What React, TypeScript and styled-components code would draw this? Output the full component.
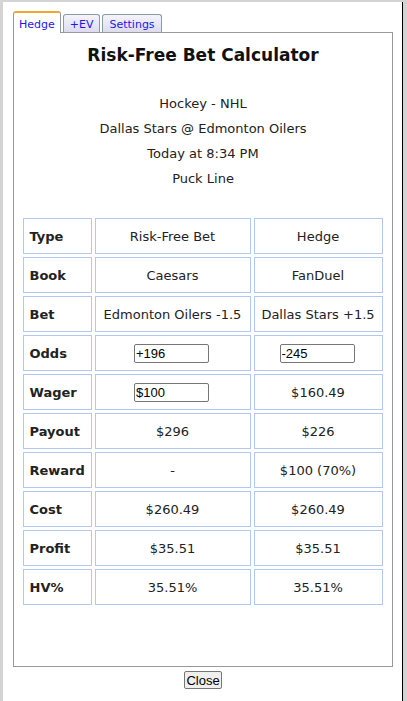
import React, { FC } from 'react';
import styled, { createGlobalStyle, css } from 'styled-components';

const GlobalStyle = createGlobalStyle`
  html, body {
    margin: 0;
    padding: 0;
    background: #ffffff;
  }
  body {
    font-family: "DejaVu Sans", Verdana, sans-serif;
    font-size: 13px;
    color: #222;
  }
`;

const Frame = styled.div`
  box-sizing: border-box;
  width: 407px;
  height: 701px;
  border-top: 2px solid #d4d4d4;
  border-left: 3px solid #d4d4d4;
  border-right: 4px solid #d4d4d4;
  box-shadow: inset -1px 0 0 #000;
  display: flex;
  flex-direction: column;
  padding: 10px 0 0 10px;
`;

const TabBar = styled.div`
  display: flex;
  align-items: flex-end;
  gap: 2px;
  height: 20px;
  position: relative;
  z-index: 1;
`;

const Tab = styled.div<{ active?: boolean }>`
  box-sizing: border-box;
  font-family: "DejaVu Sans", Tahoma, sans-serif;
  font-size: 11px;
  color: #1a1ae6;
  border: 1px solid #8b9ba6;
  border-bottom: none;
  border-radius: 3px 3px 0 0;
  display: flex;
  align-items: flex-end;
  padding-bottom: 1px;
  ${({ active }) =>
    active
      ? css`
          padding: 0 5px 2px;
          height: 22px;
          background: #fff;
          border-top: 2px solid #f2a730;
          margin-bottom: -1px;
        `
      : css`
          padding: 0 6px 1px;
          height: 18px;
          background: linear-gradient(#f4f4fc, #dcdcf0);
        `}
`;

const Panel = styled.div`
  box-sizing: border-box;
  width: 380px;
  height: 635px;
  border: 1px solid #999;
  background: #fff;
  display: flex;
  flex-direction: column;
  align-items: center;
`;

const Title = styled.h1`
  margin: 12px 0 0;
  font-size: 17px;
  font-weight: bold;
  color: #111;
`;

const Info = styled.div`
  margin-top: 30px;
  display: flex;
  flex-direction: column;
  align-items: center;
  gap: 8px;
  line-height: 17px;
`;

const Table = styled.table`
  margin: 28px 0 0 -1px;
  border-spacing: 3px;
  border-collapse: separate;
`;

const Cell = styled.td<{ w: number; label?: boolean }>`
  box-sizing: border-box;
  width: ${({ w }) => w}px;
  height: 36px;
  border: 1px solid #b3c8f0;
  text-align: ${({ label }) => (label ? 'left' : 'center')};
  padding: 0 0 0 ${({ label }) => (label ? '6px' : '0')};
  font-weight: ${({ label }) => (label ? 'bold' : 'normal')};
  white-space: nowrap;
`;

const Input = styled.input`
  box-sizing: border-box;
  width: 75px;
  height: 19px;
  font-family: "Liberation Sans", Arial, sans-serif;
  font-size: 13px;
  padding: 0 1px;
  border: 1px solid #767676;
  border-radius: 2px;
  margin-left: -2px;
`;

const Footer = styled.div`
  width: 380px;
  display: flex;
  justify-content: center;
  padding-top: 4px;
`;

const Button = styled.button`
  font-family: "Liberation Sans", Arial, sans-serif;
  font-size: 13px;
  padding: 0 1px;
  height: 18px;
  border: 1px solid #767676;
  border-radius: 2px;
  background: #efefef;
  color: #000;
`;

type Row = { label: string; a: React.ReactNode; b: React.ReactNode };

const rows: Row[] = [
  { label: 'Type', a: 'Risk-Free Bet', b: 'Hedge' },
  { label: 'Book', a: 'Caesars', b: 'FanDuel' },
  { label: 'Bet', a: 'Edmonton Oilers -1.5', b: 'Dallas Stars +1.5' },
  { label: 'Odds', a: <Input defaultValue="+196" />, b: <Input defaultValue="-245" /> },
  { label: 'Wager', a: <Input defaultValue="$100" />, b: '$160.49' },
  { label: 'Payout', a: '$296', b: '$226' },
  { label: 'Reward', a: '-', b: '$100 (70%)' },
  { label: 'Cost', a: '$260.49', b: '$260.49' },
  { label: 'Profit', a: '$35.51', b: '$35.51' },
  { label: 'HV%', a: '35.51%', b: '35.51%' },
];

const App: FC = () => (
  <>
    <GlobalStyle />
    <Frame>
      <TabBar>
        <Tab active>Hedge</Tab>
        <Tab>+EV</Tab>
        <Tab>Settings</Tab>
      </TabBar>
      <Panel>
        <Title>Risk-Free Bet Calculator</Title>
        <Info>
          <span>Hockey - NHL</span>
          <span>Dallas Stars @ Edmonton Oilers</span>
          <span>Today at 8:34 PM</span>
          <span>Puck Line</span>
        </Info>
        <Table>
          <tbody>
            {rows.map((r) => (
              <tr key={r.label}>
                <Cell w={69} label>
                  {r.label}
                </Cell>
                <Cell w={156}>{r.a}</Cell>
                <Cell w={129}>{r.b}</Cell>
              </tr>
            ))}
          </tbody>
        </Table>
      </Panel>
      <Footer>
        <Button>Close</Button>
      </Footer>
    </Frame>
  </>
);

export default App;
